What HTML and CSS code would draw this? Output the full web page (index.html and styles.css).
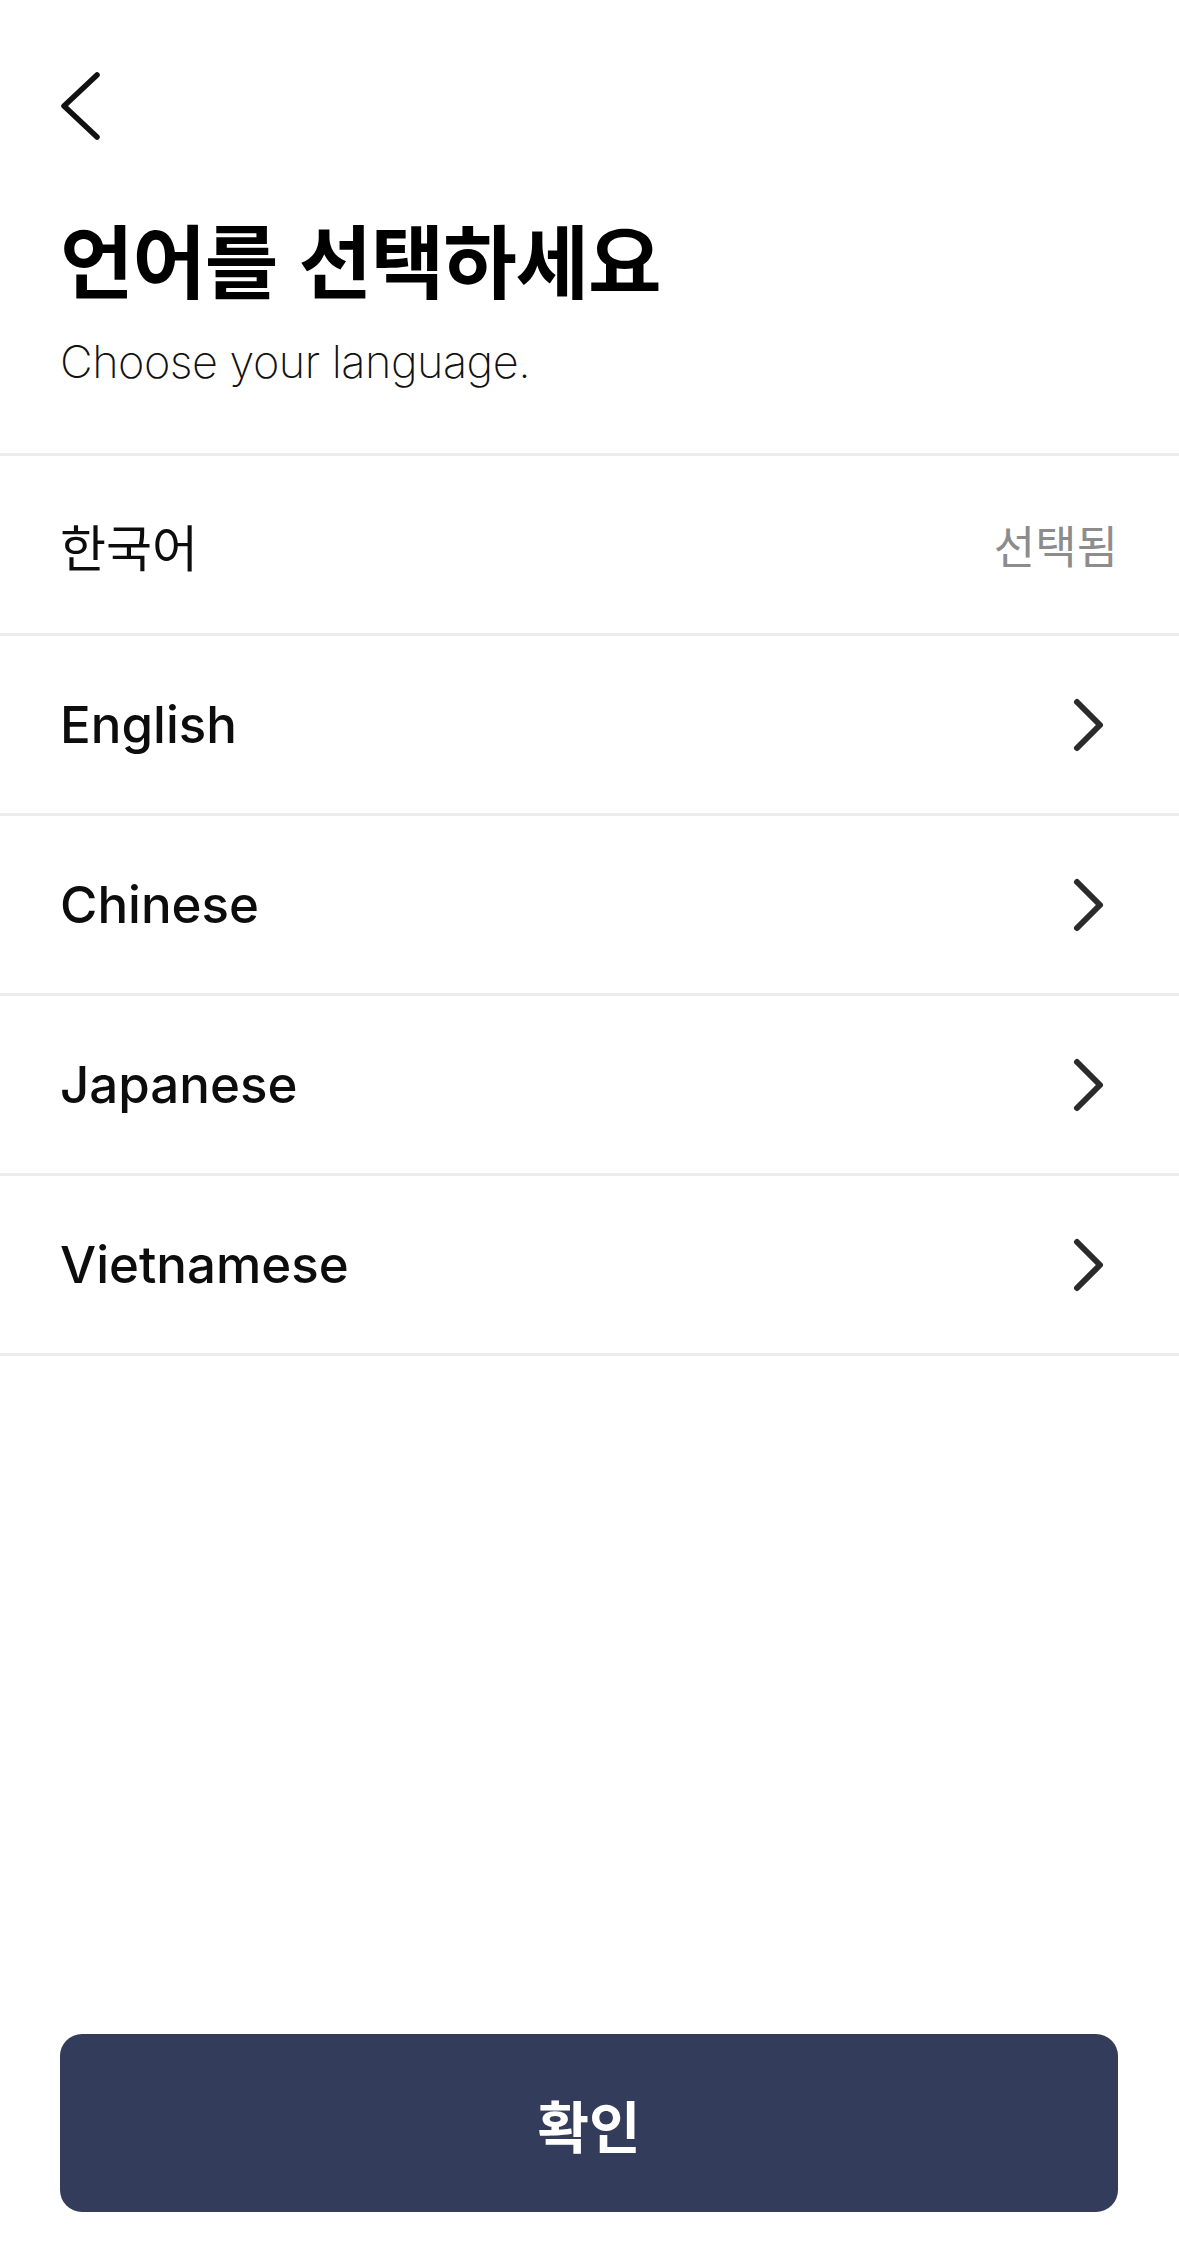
FILE: index.html
```html
<!DOCTYPE html>
<html lang="ko">
<head>
    <meta charset="UTF-8">
    <meta name="viewport" content="width=device-width, initial-scale=1.0">
    <title>언어 선택</title>
    <link rel="stylesheet" href="styles.css">
</head>
<body>
    <div class="page">
        <div class="top-bar">
            <a href="#" class="back-btn" aria-label="뒤로">
                <svg width="44" height="72" viewBox="0 0 44 72">
                    <path d="M37 5 L4 36 L37 67" fill="none" stroke="#111" stroke-width="5.5" stroke-linecap="round" stroke-linejoin="round"/>
                </svg>
            </a>
        </div>

        <div class="title-block">
            <h1>언어를 선택하세요</h1>
            <p>Choose your language.</p>
        </div>

        <ul class="lang-list">
            <li class="lang-item selected">
                <span class="lang-name">한국어</span>
                <span class="lang-state">선택됨</span>
            </li>
            <li class="lang-item">
                <span class="lang-name">English</span>
                <svg class="chevron" width="34" height="56" viewBox="0 0 34 56">
                    <path d="M6 5 L29 28 L6 51" fill="none" stroke="#2b2b2b" stroke-width="6" stroke-linecap="round" stroke-linejoin="round"/>
                </svg>
            </li>
            <li class="lang-item">
                <span class="lang-name">Chinese</span>
                <svg class="chevron" width="34" height="56" viewBox="0 0 34 56">
                    <path d="M6 5 L29 28 L6 51" fill="none" stroke="#2b2b2b" stroke-width="6" stroke-linecap="round" stroke-linejoin="round"/>
                </svg>
            </li>
            <li class="lang-item">
                <span class="lang-name">Japanese</span>
                <svg class="chevron" width="34" height="56" viewBox="0 0 34 56">
                    <path d="M6 5 L29 28 L6 51" fill="none" stroke="#2b2b2b" stroke-width="6" stroke-linecap="round" stroke-linejoin="round"/>
                </svg>
            </li>
            <li class="lang-item">
                <span class="lang-name">Vietnamese</span>
                <svg class="chevron" width="34" height="56" viewBox="0 0 34 56">
                    <path d="M6 5 L29 28 L6 51" fill="none" stroke="#2b2b2b" stroke-width="6" stroke-linecap="round" stroke-linejoin="round"/>
                </svg>
            </li>
        </ul>

        <div class="footer">
            <button class="confirm-btn">확인</button>
        </div>
    </div>
</body>
</html>
```

FILE: styles.css
```css
body {
    margin: 0;
    padding: 0;
    background-color: #ffffff;
    font-family: Inter, "Noto Sans CJK KR", sans-serif;
    color: #111;
}

.page {
    display: flex;
    flex-direction: column;
    min-height: 100vh;
    box-sizing: border-box;
}

/* 상단 뒤로가기 */
.top-bar {
    padding: 70px 0 0 60px;
    height: 80px;
}

.back-btn {
    display: inline-block;
}

.back-btn svg {
    display: block;
}

/* 제목 */
.title-block {
    padding: 59px 60px 0 60px;
}

.title-block h1 {
    margin: 0;
    font-family: "Noto Sans CJK KR", sans-serif;
    font-size: 80px;
    font-weight: 700;
    line-height: 96px;
    letter-spacing: -1.2px;
    color: #000;
}

.title-block p {
    margin: 27px 0 0 0;
    font-family: Inter, sans-serif;
    font-size: 45px;
    font-weight: 200;
    line-height: 60px;
    color: #111;
    letter-spacing: -0.5px;
}

/* 언어 목록 */
.lang-list {
    list-style: none;
    margin: 61px 0 0 0;
    padding: 0;
    border-top: 3px solid #ececec;
}

.lang-item {
    display: flex;
    justify-content: space-between;
    align-items: center;
    height: 177px;
    padding: 0 74px 0 60px;
    border-bottom: 3px solid #ececec;
}

.lang-item.selected {
    padding-right: 61px;
}

.lang-name {
    font-size: 51px;
    font-weight: 500;
    color: #0d0d0d;
}

.lang-item.selected .lang-name {
    font-family: "Noto Sans CJK KR", sans-serif;
    font-size: 50px;
    font-weight: 400;
}

.lang-state {
    font-family: "Noto Sans CJK KR", sans-serif;
    font-size: 45px;
    color: #8c8c8c;
}

.chevron {
    display: block;
}

/* 확인 버튼 */
.footer {
    margin-top: auto;
    padding: 0 61px 48px 60px;
}

.confirm-btn {
    width: 100%;
    height: 178px;
    border: none;
    border-radius: 22px;
    background-color: #333c5b;
    color: #fff;
    font-family: "Noto Sans CJK KR", sans-serif;
    font-size: 56px;
    font-weight: 700;
    cursor: pointer;
}
```
